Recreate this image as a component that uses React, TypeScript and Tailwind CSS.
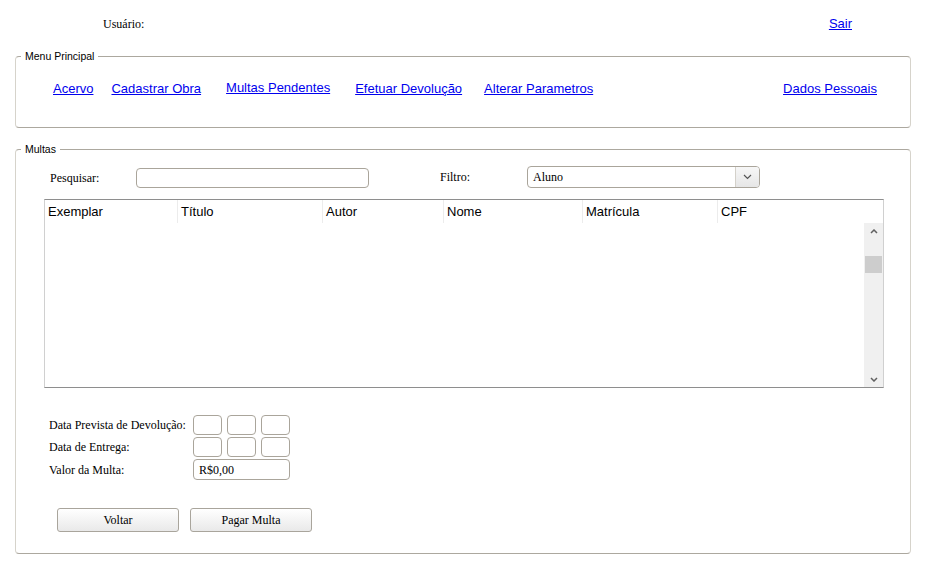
import React from 'react';

const serif = 'font-[Liberation_Serif,serif]';
const sans = 'font-[Liberation_Sans,Arial,sans-serif]';

const columns = [
  { label: 'Exemplar', w: 'w-[133px]' },
  { label: 'Título', w: 'w-[145px]' },
  { label: 'Autor', w: 'w-[121px]' },
  { label: 'Nome', w: 'w-[139px]' },
  { label: 'Matrícula', w: 'w-[135px]' },
  { label: 'CPF', w: 'flex-1' },
];

const Box = ({ className = '' }: { className?: string }) => (
  <div className={`h-[20px] rounded-[4px] border border-[#aaa59b] bg-white ${className}`} />
);

const Button = ({ children }: { children: React.ReactNode }) => (
  <button
    className={`${serif} h-[24px] w-[122px] rounded-[3px] border border-[#a9a59c] bg-gradient-to-b from-white to-[#e9e9e9] text-[12px] text-black`}
  >
    {children}
  </button>
);

export default function App() {
  return (
    <div className={`${sans} min-h-[568px] w-[925px] bg-white`}>
      {/* top bar */}
      <div className="flex h-[47px] items-center">
        <span className={`${serif} ml-[103px] text-[12px] text-black`}>Usuário:</span>
        <a href="#" className="ml-auto mr-[73px] text-[13px] text-[#0000ee] underline">
          Sair
        </a>
      </div>

      {/* Menu Principal */}
      <fieldset className="ml-[15px] mt-[2px] w-[896px] rounded-[4px] border border-x-[#d6d3cb] border-y-[#aca89f] pb-[30px]">
        <legend className="ml-[5px] px-[4px] text-[10.5px] leading-[14px] text-black">Menu Principal</legend>
        <div className="mt-[18px] flex items-center text-[13px] leading-[16px] text-[#0000ee]">
          <a href="#" className="ml-[37px] underline">Acervo</a>
          <a href="#" className="ml-[18px] underline">Cadastrar Obra</a>
          <a href="#" className="ml-[25px] -translate-y-[1px] underline">Multas Pendentes</a>
          <a href="#" className="ml-[25px] underline">Efetuar Devolução</a>
          <a href="#" className="ml-[22px] underline">Alterar Parametros</a>
          <a href="#" className="ml-auto mr-[33px] underline">Dados Pessoais</a>
        </div>
      </fieldset>

      {/* Multas */}
      <fieldset className="ml-[15px] mt-[14px] w-[896px] rounded-[4px] border border-x-[#d6d3cb] border-y-[#aca89f] pb-[21px]">
        <legend className="ml-[5px] px-[4px] text-[10.5px] leading-[14px] text-black">Multas</legend>

        {/* search row */}
        <div className="mt-[10px] flex items-end">
          <span className={`${serif} ml-[34px] w-[86px] pb-[1px] text-[12px] leading-[18px]`}>Pesquisar:</span>
          <input className="h-[20px] w-[233px] rounded-[4px] border border-[#aaa59b] bg-white outline-none" />
          <span className={`${serif} ml-[71px] w-[87px] pb-[2px] text-[12px] leading-[18px]`}>Filtro:</span>
          <div className="flex h-[22px] w-[233px] overflow-hidden rounded-[4px] border border-[#aaa59b] bg-white">
            <span className={`${serif} flex-1 pl-[5px] pt-[1px] text-[12px] leading-[18px]`}>Aluno</span>
            <div className="flex w-[24px] items-center justify-center border-l border-[#d4d1ca] bg-gradient-to-b from-[#f7f7f7] to-[#e6e6e6]">
              <svg width="9" height="6" viewBox="0 0 9 6">
                <path d="M1 1 L4.5 4.5 L8 1" fill="none" stroke="#555" strokeWidth="1.2" />
              </svg>
            </div>
          </div>
        </div>

        {/* table */}
        <div className="ml-[28px] mt-[11px] flex h-[189px] w-[840px] flex-col border border-x-[#d0d0d0] border-y-[#8e8e8e] bg-white">
          <div className="flex h-[23px] items-center text-[13px] text-black">
            {columns.map((c, i) => (
              <div
                key={c.label}
                className={`${c.w} flex h-full items-center pl-[3px] ${i < columns.length - 1 ? 'border-r border-[#ececec]' : ''}`}
              >
                {c.label}
              </div>
            ))}
          </div>
          <div className="flex flex-1">
            <div className="flex-1" />
            <div className="flex w-[19px] flex-col items-center bg-[#f0f0f0]">
              <svg className="mt-[6px]" width="8" height="5" viewBox="0 0 8 5">
                <path d="M1 4 L4 1 L7 4" fill="none" stroke="#606060" strokeWidth="1.5" />
              </svg>
              <div className="mt-[22px] h-[17px] w-[17px] bg-[#cdcdcd]" />
              <div className="flex-1" />
              <svg className="mb-[5px]" width="8" height="5" viewBox="0 0 8 5">
                <path d="M1 1 L4 4 L7 1" fill="none" stroke="#606060" strokeWidth="1.5" />
              </svg>
            </div>
          </div>
        </div>

        {/* date rows */}
        <div className={`${serif} ml-[33px] mt-[27px] flex flex-col gap-[2px] text-[12px] text-black`}>
          <div className="flex items-center">
            <span className="w-[144px] whitespace-nowrap">Data Prevista de Devolução:</span>
            <div className="flex gap-[5px]">
              <Box className="w-[29px]" />
              <Box className="w-[29px]" />
              <Box className="w-[29px]" />
            </div>
          </div>
          <div className="flex items-center">
            <span className="w-[144px] whitespace-nowrap">Data de Entrega:</span>
            <div className="flex gap-[5px]">
              <Box className="w-[29px]" />
              <Box className="w-[29px]" />
              <Box className="w-[29px]" />
            </div>
          </div>
          <div className="flex items-center">
            <span className="w-[144px] whitespace-nowrap">Valor da Multa:</span>
            <div className="flex h-[21px] w-[97px] items-center rounded-[4px] border border-[#aaa59b] bg-white pl-[5px] text-[12px]">
              R$0,00
            </div>
          </div>
        </div>

        {/* buttons */}
        <div className="ml-[41px] mt-[28px] flex gap-[11px]">
          <Button>Voltar</Button>
          <Button>Pagar Multa</Button>
        </div>
      </fieldset>
    </div>
  );
}
